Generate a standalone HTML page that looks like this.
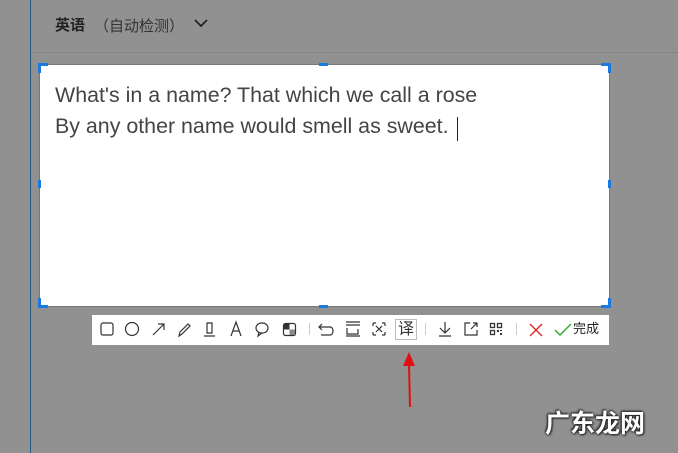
<!DOCTYPE html>
<html><head><meta charset="utf-8"><style>
body{margin:0;width:678px;height:453px;background:#919191;position:relative;overflow:hidden;font-family:"Liberation Sans","Noto Sans CJK SC",sans-serif}
.abs{position:absolute}
</style></head><body>
<div class="abs" style="left:30px;top:0;width:1px;height:453px;background:#1d5a8a"></div>
<div class="abs" style="left:31px;top:52px;width:647px;height:1px;background:#858585"></div>
<div class="abs" style="left:55px;top:14px;font-size:15px;color:#222;font-weight:bold">英语</div>
<div class="abs" style="left:94px;top:15px;font-size:15px;color:#333">（自动检测）</div>
<svg class="abs" style="left:193px;top:17px" width="16" height="12"><path d="M2 3 L8 9 L14 3" stroke="#222" stroke-width="1.8" fill="none"/></svg>
<div class="abs" style="left:39px;top:64px;width:571px;height:243px;background:#fff;border:1px solid #777;box-sizing:border-box"></div>
<div class="abs" style="left:55px;top:80px;font-size:21.4px;line-height:31px;color:#444;white-space:nowrap">What's in a name? That which we call a rose<br>By any other name would smell as sweet.</div>
<div class="abs" style="left:457px;top:117px;width:1px;height:24px;background:#222"></div>
<svg class="abs" style="left:0;top:0" width="678" height="453">
<g fill="#1a7ae0">
<rect x="38" y="63" width="10" height="3"/><rect x="38" y="63" width="3" height="10"/>
<rect x="601" y="63" width="10" height="3"/><rect x="608" y="63" width="3" height="10"/>
<rect x="38" y="305" width="10" height="3"/><rect x="38" y="298" width="3" height="10"/>
<rect x="601" y="305" width="10" height="3"/><rect x="608" y="298" width="3" height="10"/>
<rect x="319" y="63" width="9" height="3"/><rect x="319" y="305" width="9" height="3"/>
<rect x="38" y="180" width="3" height="8"/><rect x="608" y="180" width="3" height="8"/>
</g>
<rect x="92" y="315" width="517" height="30" fill="#fff"/>
<g stroke="#333" stroke-width="1.2" fill="none">
<rect x="101" y="323" width="12" height="12" rx="2"/>
<circle cx="132" cy="329" r="6.5"/>
<path d="M153 335 L164 324 M158 324 L164 324 L164 330"/>
<path d="M179 336 L180 332 L188 324 L190 326 L182 334 Z"/>
<path d="M207 323 H212 V333 H207 Z M204 336 H215"/>
<path d="M231 336 L236 322 L241 336 M233 331 H239"/>
<path d="M262 333 C254 333 254 323 262 323 C270 323 270 333 262 333 L258 336 L259 332"/>
<path d="M322 324 L319 327 L322 330 M319 327 H330 C334 327 334 335 330 335 H321"/>
<path d="M346 322 H360 M346 325 H360 M347 328 V334 H358 V329 M346 336 H360"/>
<path d="M373 323 V326 M373 323 H376 M385 323 V326 M385 323 H382 M373 335 V332 M373 335 H376 M385 335 V332 M385 335 H382 M376 326 L382 332 M382 326 L376 332"/>
<path d="M439 336 H451 M445 322 V333 M440 328 L445 333 L450 328"/>
<path d="M470 323 H465 V335 H477 V330 M471 329 L477 323 M473 323 H477 V327"/>
</g>
<rect x="283.5" y="323.5" width="12" height="12" rx="2" fill="#fff" stroke="#333" stroke-width="1.2"/>
<rect x="284" y="324" width="5.5" height="5.5" fill="#333"/><rect x="289.5" y="329.5" width="5.5" height="5.5" fill="#888"/>
<g fill="none" stroke="#333" stroke-width="1.3"><rect x="490.5" y="323.5" width="4" height="4"/><rect x="497.5" y="323.5" width="4" height="4"/><rect x="490.5" y="330.5" width="4" height="4"/></g>
<g fill="#333"><rect x="497" y="330" width="2" height="2"/><rect x="500" y="333" width="2" height="2"/><rect x="500" y="330" width="2" height="1"/></g>
<rect x="395.5" y="319.5" width="21" height="20" fill="none" stroke="#bbb"/>
<g fill="#ccc"><rect x="309" y="323" width="1" height="12"/><rect x="425" y="323" width="1" height="12"/><rect x="516" y="323" width="1" height="12"/></g>
<path d="M530 324 L542 336 M542 324 L530 336" stroke="#e02020" stroke-width="1.3"/>
<path d="M555 330 L560 335 L571 324" stroke="#2aa82a" stroke-width="1.4" fill="none"/>
<path d="M409 364 L410 407" stroke="#e01010" stroke-width="2"/>
<path d="M403 366 L409 352 L415 366 Z" fill="#e01010"/>
</svg>
<div class="abs" style="left:398px;top:320px;font-size:16px;line-height:20px;color:#333">译</div>
<div class="abs" style="left:573px;top:321px;font-size:13px;line-height:16px;color:#222">完成</div>
<div class="abs" style="left:545px;top:409px;font-size:25px;line-height:30px;color:#fff;font-weight:bold;text-shadow:0 0 2px #222,1px 1px 2px #222,-1px -1px 2px #222">广东龙网</div>
</body></html>
